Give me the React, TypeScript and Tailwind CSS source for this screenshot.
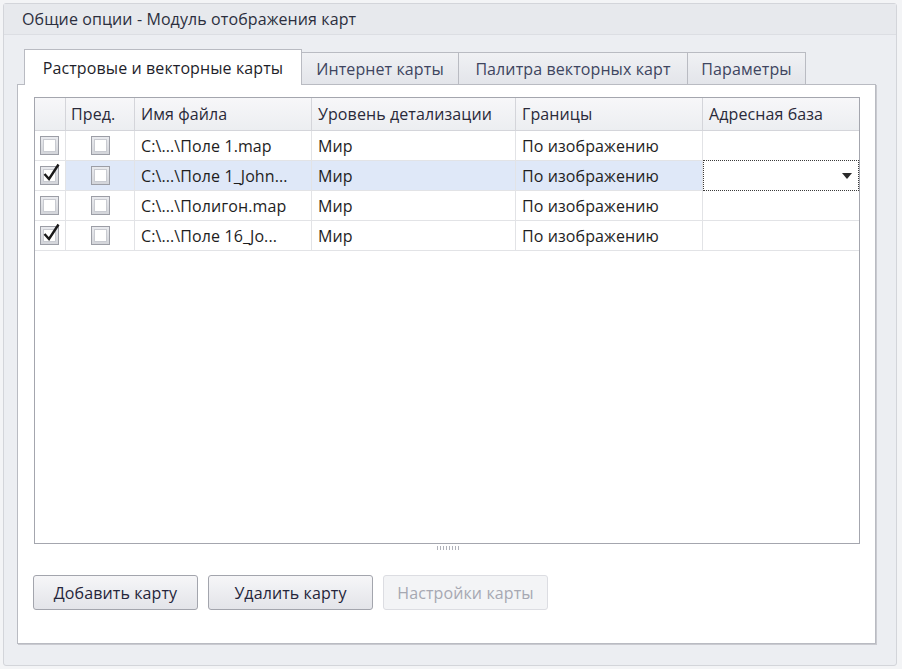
import React from 'react'

const font = { fontFamily: '"Open Sans", "Noto Sans", sans-serif' }

const rows = [
  { on: false, file: 'C:\\...\\Поле 1.map', sel: false },
  { on: true, file: 'C:\\...\\Поле 1_John...', sel: true },
  { on: false, file: 'C:\\...\\Полигон.map', sel: false },
  { on: true, file: 'C:\\...\\Поле 16_Jo...', sel: false },
]

const cols = 'grid grid-cols-[31px_69px_177px_204px_187px_156px]'

function Check({ on }: { on: boolean }) {
  return (
    <div className="relative w-[19px] h-[19px] border border-[#9c9ea6] bg-gradient-to-b from-[#e9eaee] to-[#d3d5da] p-[2px]">
      <div className="w-full h-full bg-white border border-[#c9cbd1]" />
      {on && (
        <svg className="absolute left-[1px] -top-[5px]" width="19" height="20" viewBox="0 0 19 20">
          <path d="M2.5 12 L7 17 L16.5 2.5" fill="none" stroke="#1a1a1a" strokeWidth="2.4" />
        </svg>
      )}
    </div>
  )
}

function Tab({ label, w, active }: { label: string; w: string; active?: boolean }) {
  if (active) {
    return (
      <div className={w + ' h-[36px] -mb-px flex items-center justify-center bg-white border border-b-0 border-[#b9bbc2] text-[#1e1e2a] z-10'}>
        {label}
      </div>
    )
  }
  return (
    <div className={w + ' h-[32px] flex items-center justify-center bg-gradient-to-b from-[#f0f1f4] to-[#e3e5ea] border border-b-0 border-[#b9bbc2] text-[#3e4560] -ml-px'}>
      {label}
    </div>
  )
}

function Button({ label, disabled }: { label: string; disabled?: boolean }) {
  return (
    <div
      className={
        'w-[165px] h-[35px] flex items-center justify-center rounded-[3px] border ' +
        (disabled
          ? 'border-[#dcdde2] bg-[#f3f4f6] text-[#a6a8b2]'
          : 'border-[#a3a5ad] bg-gradient-to-b from-[#f6f6f8] to-[#e3e4e9] text-[#25253a]')
      }
    >
      {label}
    </div>
  )
}

export default function App() {
  return (
    <div style={font} className="w-[902px] h-[669px] bg-[#f3f4f6] p-[3px] text-[16px] tracking-[0.1px] text-[#1e1e1e]">
      <div className="w-[894px] h-[663px] rounded-[3px] border border-[#d3d5da] bg-[#eceef2] flex flex-col">
        <div className="h-[31px] shrink-0 flex items-center pl-[18px] bg-[#e7e9ed] border-b border-[#dcdee3] text-[#2c2f3e]">
          Общие опции - Модуль отображения карт
        </div>
        <div className="flex-1 flex flex-col pl-[13px] pr-[20px] pt-[14px] pb-[21px]">
          <div className="flex items-end pl-[7px]">
            <Tab label="Растровые и векторные карты" w="w-[278px]" active />
            <Tab label="Интернет карты" w="w-[158px]" />
            <Tab label="Палитра векторных карт" w="w-[230px]" />
            <Tab label="Параметры" w="w-[119px]" />
          </div>
          <div className="flex-1 bg-white border border-[#b9bbc2] shadow-[1px_1px_0_#c9cad0] pl-[16px] pr-[14px] pt-[12px] flex flex-col">
            <div className="w-[826px] h-[447px] border border-[#a4a6ae] flex flex-col">
              <div className={cols + ' h-[33px] bg-gradient-to-b from-[#f7f7f9] to-[#eceef1] border-b border-[#d4d5da] text-[#2a2a3a]'}>
                <div className="border-r border-[#d4d5da]" />
                <div className="border-r border-[#d4d5da] flex items-center pl-[5px]">Пред.</div>
                <div className="border-r border-[#d4d5da] flex items-center pl-[6px]">Имя файла</div>
                <div className="border-r border-[#d4d5da] flex items-center pl-[6px]">Уровень детализации</div>
                <div className="border-r border-[#d4d5da] flex items-center pl-[6px]">Границы</div>
                <div className="flex items-center pl-[6px]">Адресная база</div>
              </div>
              {rows.map((r, i) => (
                <div key={i} className={cols + ' h-[30px] border-b border-[#e2e3e6] ' + (r.sel ? 'bg-[#dfe8f8]' : 'bg-white')}>
                  <div className="bg-white border-r border-[#e2e3e6] flex items-center justify-center pr-[1px]">
                    <Check on={r.on} />
                  </div>
                  <div className="border-r border-[#e2e3e6] flex items-center justify-center">
                    <Check on={false} />
                  </div>
                  <div className="border-r border-[#e2e3e6] flex items-center pl-[6px] whitespace-nowrap overflow-hidden">{r.file}</div>
                  <div className="border-r border-[#e2e3e6] flex items-center pl-[6px]">Мир</div>
                  <div className="border-r border-[#e2e3e6] flex items-center pl-[6px] whitespace-nowrap">По изображению</div>
                  {r.sel ? (
                    <div className="bg-white border border-dotted border-[#3a3a3a] flex items-center justify-end pr-[6px] -my-px">
                      <svg width="10" height="6" viewBox="0 0 10 6">
                        <path d="M0 0 H10 L5 6 Z" fill="#2a2a2a" />
                      </svg>
                    </div>
                  ) : (
                    <div />
                  )}
                </div>
              ))}
            </div>
            <div className="h-[6px] mt-[2px] flex justify-center">
              <div className="w-[22px] h-[4px] bg-[repeating-linear-gradient(90deg,#b0b2ba_0px,#b0b2ba_1px,transparent_1px,transparent_3px)]" />
            </div>
            <div className="flex gap-[10px] mt-[23px] -ml-[1px]">
              <Button label="Добавить карту" />
              <Button label="Удалить карту" />
              <Button label="Настройки карты" disabled />
            </div>
          </div>
        </div>
      </div>
    </div>
  )
}
